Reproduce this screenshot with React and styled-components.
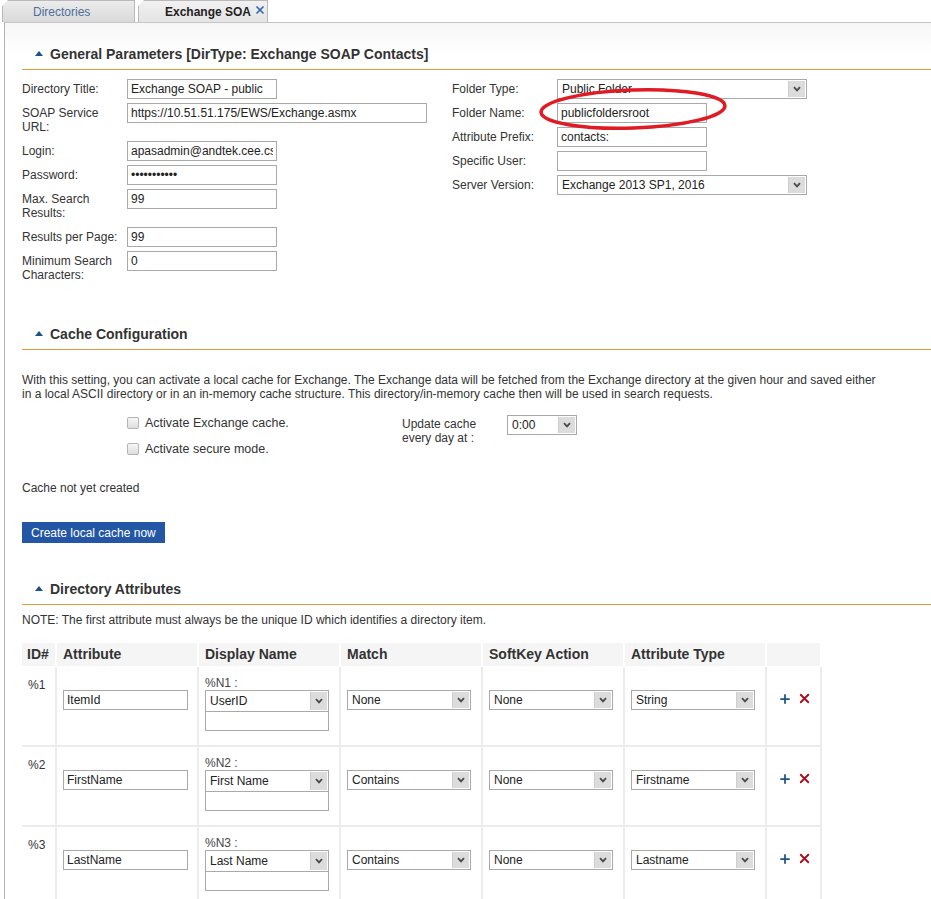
import React from "react";
import styled, { createGlobalStyle } from "styled-components";
import { X, Plus } from "lucide-react";

const GlobalStyle = createGlobalStyle`
  body {
    margin: 0;
    background: #fff;
    font-family: "Liberation Sans", Arial, sans-serif;
    font-size: 12px;
    color: #333;
    overflow: hidden;
  }
`;

const TabBar = styled.div`
  display: flex;
  align-items: flex-end;
  gap: 3px;
  height: 22px;
  padding-left: 2px;
`;

const Tab = styled.div`
  box-sizing: border-box;
  width: ${(p) => p.$w}px;
  height: 22px;
  display: flex;
  align-items: center;
  padding-left: ${(p) => (p.$active ? 26 : 30)}px;
  border: 1px solid #b9b9b9;
  border-bottom: none;
  clip-path: polygon(6px 0, 100% 0, 100% 100%, 0 100%, 0 6px);
  background: ${(p) =>
    p.$active
      ? "linear-gradient(#f1f1f1, #e4e4e4)"
      : "linear-gradient(#ececec, #d9d9d9)"};
  color: ${(p) => (p.$active ? "#222" : "#4d6e9c")};
  font-weight: ${(p) => (p.$active ? "bold" : "normal")};
  font-size: 12px;
  gap: 3px;
  svg {
    color: #3a68b0;
    margin-top: -3px;
  }
`;

const Panel = styled.div`
  margin-left: 4px;
  min-height: calc(100vh - 23px);
  border-left: 1px solid #b3b3b3;
  border-top: 1px solid #c6c6c6;
  padding-left: 17px;
  padding-top: 22px;
  background: linear-gradient(#f6f6f6, #fff 30px);
`;

const SectionHeader = styled.div`
  display: flex;
  align-items: center;
  gap: 7px;
  height: 18px;
  padding-left: 13px;
  padding-bottom: 6px;
  margin-top: ${(p) => p.$mt || 0}px;
  border-bottom: 1px solid #e39a3a;
  font-weight: bold;
  font-size: 14px;
  color: #333;
`;

const Caret = styled.span`
  width: 0;
  height: 0;
  border-left: 4px solid transparent;
  border-right: 4px solid transparent;
  border-bottom: 5px solid #1f4e8c;
  margin-top: -2px;
`;

const FormGrid = styled.div`
  display: grid;
  grid-template-columns: 430px 1fr;
  margin-top: 9px;
`;

const FormColumn = styled.div`
  display: flex;
  flex-direction: column;
  gap: 4px;
`;

const FormRow = styled.div`
  display: flex;
  align-items: flex-start;
`;

const Label = styled.div`
  box-sizing: border-box;
  width: 105px;
  padding: 3px 4px 3px 0;
  line-height: 14px;
  color: #333;
`;

const FieldWrap = styled.div`
  position: relative;
`;

const TextInput = styled.input`
  box-sizing: border-box;
  width: ${(p) => p.$w || 150}px;
  height: 20px;
  margin: 0;
  border: 1px solid #a9a9a9;
  padding: 0 3px;
  font-family: "Liberation Sans", Arial, sans-serif;
  font-size: 12px;
  color: #222;
  background: #fff;
  outline: none;
`;

const SelectBox = styled.div`
  box-sizing: border-box;
  width: ${(p) => p.$w || 124}px;
  height: ${(p) => p.$h || 20}px;
  display: flex;
  align-items: stretch;
  border: 1px solid #a9a9a9;
  background: #fff;
  color: #222;
`;

const SelectValue = styled.span`
  flex: 1;
  display: flex;
  align-items: center;
  padding-left: 4px;
  white-space: nowrap;
  overflow: hidden;
`;

const SelectArrow = styled.span`
  width: 16px;
  display: flex;
  align-items: center;
  justify-content: center;
  background: #dcdcdc;
  border-left: 1px solid #cdcdcd;
  margin: 1px;
`;

const Chevron = () => (
  <svg width="8" height="6" viewBox="0 0 8 6">
    <path d="M1 1.2 L4 4.4 L7 1.2" fill="none" stroke="#4a4a4a" strokeWidth="1.8" />
  </svg>
);

const Select = ({ value, w, h }) => (
  <SelectBox $w={w} $h={h}>
    <SelectValue>{value}</SelectValue>
    <SelectArrow>
      <Chevron />
    </SelectArrow>
  </SelectBox>
);

const Annotation = styled.svg`
  position: absolute;
  left: -20px;
  top: -18px;
  pointer-events: none;
  overflow: visible;
`;

const Paragraph = styled.p`
  margin: ${(p) => p.$mt || 0}px 0 0;
  line-height: 14px;
  white-space: nowrap;
  color: #333;
`;

const CacheOptions = styled.div`
  display: grid;
  grid-template-columns: 275px 105px auto;
  padding-left: 105px;
  margin-top: 12px;
`;

const CheckList = styled.div`
  display: flex;
  flex-direction: column;
  gap: 6px;
`;

const CheckRow = styled.label`
  display: flex;
  align-items: center;
  gap: 6px;
  height: 20px;
  font-size: 12.5px;
  color: #333;
`;

const CheckBox = styled.span`
  box-sizing: border-box;
  width: 12px;
  height: 12px;
  border: 1px solid #b4b4b4;
  border-radius: 2px;
  background: linear-gradient(#f7f7f7, #dedede);
`;

const UpdateLabel = styled.div`
  padding-top: 4px;
  line-height: 14px;
`;

const UpdateSelect = styled.div`
  margin-top: 2px;
`;

const PrimaryButton = styled.button`
  display: block;
  margin-top: 27px;
  height: 21px;
  padding: 0 9px;
  border: none;
  background: #2357a6;
  color: #fff;
  font-family: "Liberation Sans", Arial, sans-serif;
  font-size: 12px;
`;

const AttrTable = styled.table`
  margin-top: 16px;
  width: 800px;
  table-layout: fixed;
  border-collapse: separate;
  border-spacing: 0;
`;

const HeadCell = styled.th`
  box-sizing: border-box;
  width: ${(p) => p.$w}px;
  height: 24px;
  padding: 0 0 1px ${(p) => p.$pl || 6}px;
  text-align: left;
  vertical-align: middle;
  background: #f5f5f5;
  border-right: 2px solid #fff;
  border-bottom: 1px solid #fff;
  font-size: 14px;
  font-weight: bold;
  color: #333;
`;

const BodyCell = styled.td`
  box-sizing: border-box;
  height: 80px;
  padding: ${(p) => p.$pt || 23}px 0 0 ${(p) => p.$pl || 6}px;
  vertical-align: top;
  border-right: 2px solid #ececec;
  border-bottom: 2px solid #ececec;
  line-height: 14px;
  color: #333;
`;

const CellNote = styled.div`
  line-height: 14px;
  color: #444;
`;

const ListBox = styled.div`
  box-sizing: border-box;
  width: 124px;
  height: 41px;
  border: 1px solid #a9a9a9;
  background: #fff;
  & > div {
    border: none;
    border-bottom: 1px solid #a9a9a9;
    width: 122px;
  }
`;

const Actions = styled.div`
  display: flex;
  align-items: center;
  gap: 5px;
`;

const formLeft = [
  { label: "Directory Title:", value: "Exchange SOAP - public" },
  { label: "SOAP Service URL:", value: "https://10.51.51.175/EWS/Exchange.asmx", w: 300 },
  { label: "Login:", value: "apasadmin@andtek.cee.cs" },
  { label: "Password:", value: "•••••••••••" },
  { label: "Max. Search Results:", value: "99" },
  { label: "Results per Page:", value: "99" },
  { label: "Minimum Search Characters:", value: "0" },
];

const attributes = [
  { id: "%1", attr: "ItemId", n: "%N1 :", display: "UserID", match: "None", soft: "None", type: "String" },
  { id: "%2", attr: "FirstName", n: "%N2 :", display: "First Name", match: "Contains", soft: "None", type: "Firstname" },
  { id: "%3", attr: "LastName", n: "%N3 :", display: "Last Name", match: "Contains", soft: "None", type: "Lastname" },
];

export default function App() {
  return (
    <>
      <GlobalStyle />
      <TabBar>
        <Tab $w={133}>Directories</Tab>
        <Tab $w={130} $active>
          Exchange SOA
          <X size={12} strokeWidth={3.5} />
        </Tab>
      </TabBar>
      <Panel>
        <SectionHeader>
          <Caret />
          General Parameters [DirType: Exchange SOAP Contacts]
        </SectionHeader>
        <FormGrid>
          <FormColumn>
            {formLeft.map((f) => (
              <FormRow key={f.label}>
                <Label>{f.label}</Label>
                <TextInput readOnly value={f.value} $w={f.w} />
              </FormRow>
            ))}
          </FormColumn>
          <FormColumn>
            <FormRow>
              <Label>Folder Type:</Label>
              <Select value="Public Folder" w={250} />
            </FormRow>
            <FormRow>
              <Label>Folder Name:</Label>
              <FieldWrap>
                <TextInput readOnly value="publicfoldersroot" />
                <Annotation width="197" height="50" viewBox="0 0 197 50">
                  <ellipse
                    cx="96"
                    cy="24"
                    rx="92"
                    ry="19"
                    transform="rotate(-2 96 24)"
                    fill="none"
                    stroke="#e01b24"
                    strokeWidth="3.5"
                  />
                </Annotation>
              </FieldWrap>
            </FormRow>
            <FormRow>
              <Label>Attribute Prefix:</Label>
              <TextInput readOnly value="contacts:" />
            </FormRow>
            <FormRow>
              <Label>Specific User:</Label>
              <TextInput readOnly value="" />
            </FormRow>
            <FormRow>
              <Label>Server Version:</Label>
              <Select value="Exchange 2013 SP1, 2016" w={250} />
            </FormRow>
          </FormColumn>
        </FormGrid>

        <SectionHeader $mt={40}>
          <Caret />
          Cache Configuration
        </SectionHeader>
        <Paragraph $mt={23}>
          With this setting, you can activate a local cache for Exchange. The Exchange data will be fetched from the Exchange directory at the given hour and saved either
          <br />
          in a local ASCII directory or in an in-memory cache structure. This directory/in-memory cache then will be used in search requests.
        </Paragraph>
        <CacheOptions>
          <CheckList>
            <CheckRow>
              <CheckBox />
              Activate Exchange cache.
            </CheckRow>
            <CheckRow>
              <CheckBox />
              Activate secure mode.
            </CheckRow>
          </CheckList>
          <UpdateLabel>
            Update cache
            <br />
            every day at :
          </UpdateLabel>
          <UpdateSelect>
            <Select value="0:00" w={70} />
          </UpdateSelect>
        </CacheOptions>
        <Paragraph $mt={22}>Cache not yet created</Paragraph>
        <PrimaryButton>Create local cache now</PrimaryButton>

        <SectionHeader $mt={37}>
          <Caret />
          Directory Attributes
        </SectionHeader>
        <Paragraph $mt={8}>
          NOTE: The first attribute must always be the unique ID which identifies a directory item.
        </Paragraph>
        <AttrTable>
          <thead>
            <tr>
              <HeadCell $w={35} $pl={5}>ID#</HeadCell>
              <HeadCell $w={142}>Attribute</HeadCell>
              <HeadCell $w={142}>Display Name</HeadCell>
              <HeadCell $w={142}>Match</HeadCell>
              <HeadCell $w={142}>SoftKey Action</HeadCell>
              <HeadCell $w={142}>Attribute Type</HeadCell>
              <HeadCell $w={55} />
            </tr>
          </thead>
          <tbody>
            {attributes.map((a) => (
              <tr key={a.id}>
                <BodyCell $pt={11}>{a.id}</BodyCell>
                <BodyCell>
                  <TextInput readOnly value={a.attr} $w={125} />
                </BodyCell>
                <BodyCell $pt={9}>
                  <CellNote>{a.n}</CellNote>
                  <ListBox>
                    <Select value={a.display} h={21} />
                  </ListBox>
                </BodyCell>
                <BodyCell>
                  <Select value={a.match} />
                </BodyCell>
                <BodyCell>
                  <Select value={a.soft} />
                </BodyCell>
                <BodyCell>
                  <Select value={a.type} />
                </BodyCell>
                <BodyCell $pt={24} $pl={11}>
                  <Actions>
                    <Plus size={14} strokeWidth={3} color="#1f4e8c" />
                    <X size={15} strokeWidth={3} color="#a3121e" />
                  </Actions>
                </BodyCell>
              </tr>
            ))}
          </tbody>
        </AttrTable>
      </Panel>
    </>
  );
}
